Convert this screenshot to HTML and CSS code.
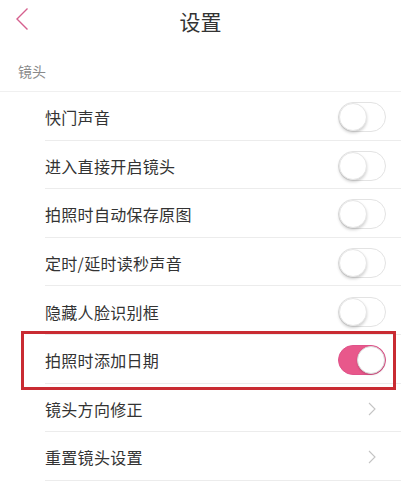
FILE: index.html
```html
<!DOCTYPE html>
<html lang="zh">
<head>
<meta charset="utf-8">
<link rel="stylesheet" href="styles.css">
</head>
<body>
<div class="page">
  <header class="topbar">
    <svg class="back" width="14" height="24" viewBox="0 0 14 24"><path d="M12.5 1.5 L2 12 L12.5 22.5" fill="none" stroke="#d5608e" stroke-width="1.4"/></svg>
    <h1 class="title">设置</h1>
  </header>
  <div class="section-label">镜头</div>
  <ul class="list">
    <li class="row"><span class="label">快门声音</span><span class="toggle"><span class="knob"></span></span></li>
    <li class="row"><span class="label">进入直接开启镜头</span><span class="toggle"><span class="knob"></span></span></li>
    <li class="row"><span class="label">拍照时自动保存原图</span><span class="toggle"><span class="knob"></span></span></li>
    <li class="row"><span class="label">定时/延时读秒声音</span><span class="toggle"><span class="knob"></span></span></li>
    <li class="row"><span class="label">隐藏人脸识别框</span><span class="toggle"><span class="knob"></span></span></li>
    <li class="row highlighted"><span class="label">拍照时添加日期</span><span class="toggle on"><span class="knob"></span></span><span class="mark"></span></li>
    <li class="row"><span class="label">镜头方向修正</span><svg class="chev" width="8" height="14" viewBox="0 0 8 14"><path d="M1 1 L7 7 L1 13" fill="none" stroke="#c4c4c4" stroke-width="1.1"/></svg></li>
    <li class="row"><span class="label">重置镜头设置</span><svg class="chev" width="8" height="14" viewBox="0 0 8 14"><path d="M1 1 L7 7 L1 13" fill="none" stroke="#c4c4c4" stroke-width="1.1"/></svg></li>
  </ul>
</div>
</body>
</html>
```
FILE: styles.css
```css
* { box-sizing: border-box; }
html, body { margin: 0; padding: 0; background: #fff; }
body { font-family: "Noto Sans CJK SC", "Noto Sans", sans-serif; color: #333; }
.page { width: 401px; position: relative; background: #fff; }
.topbar {
  height: 42px;
  display: flex;
  align-items: center;
  justify-content: center;
  position: relative;
}
.back { position: absolute; left: 15px; top: 7px; }
.title { margin: 0; font-size: 21px; font-weight: 400; color: #333; line-height: 40px; }
.section-label {
  height: 49px;
  padding: 19px 0 0 18px;
  font-size: 14px;
  line-height: 20px;
  color: #8a8a8a;
}
.list {
  list-style: none;
  margin: 0;
  padding: 0;
  border-top: 1px solid #f0f0f0;
}
.row {
  position: relative;
  margin-left: 45px;
  height: 48.6px;
  padding-top: 3px;
  border-bottom: 1px solid #ececec;
  display: flex;
  align-items: center;
  justify-content: space-between;
  padding-right: 15px;
}
.label { font-size: 16px; color: #333; letter-spacing: 0.3px; }
.toggle {
  width: 48px;
  height: 30px;
  border-radius: 15px;
  border: 1px solid #e3e3e3;
  background: #fff;
  position: relative;
  flex: none;
}
.knob {
  position: absolute;
  left: 0;
  top: 0;
  width: 28px;
  height: 28px;
  border-radius: 50%;
  background: #fff;
  border: 1px solid #e6e6e6;
  box-shadow: 0 2px 3px rgba(0,0,0,0.18);
}
.toggle.on { background: #e8588b; border-color: #e0528a; }
.toggle.on .knob { left: 18px; border-color: #d9d9d9; box-shadow: 0 1px 2px rgba(0,0,0,0.15); }
.chev { margin-right: 10px; flex: none; }
.mark {
  position: absolute;
  left: -24px;
  top: -4px;
  width: 375px;
  height: 59px;
  border: 3px solid #c92b32;
  pointer-events: none;
}
```
